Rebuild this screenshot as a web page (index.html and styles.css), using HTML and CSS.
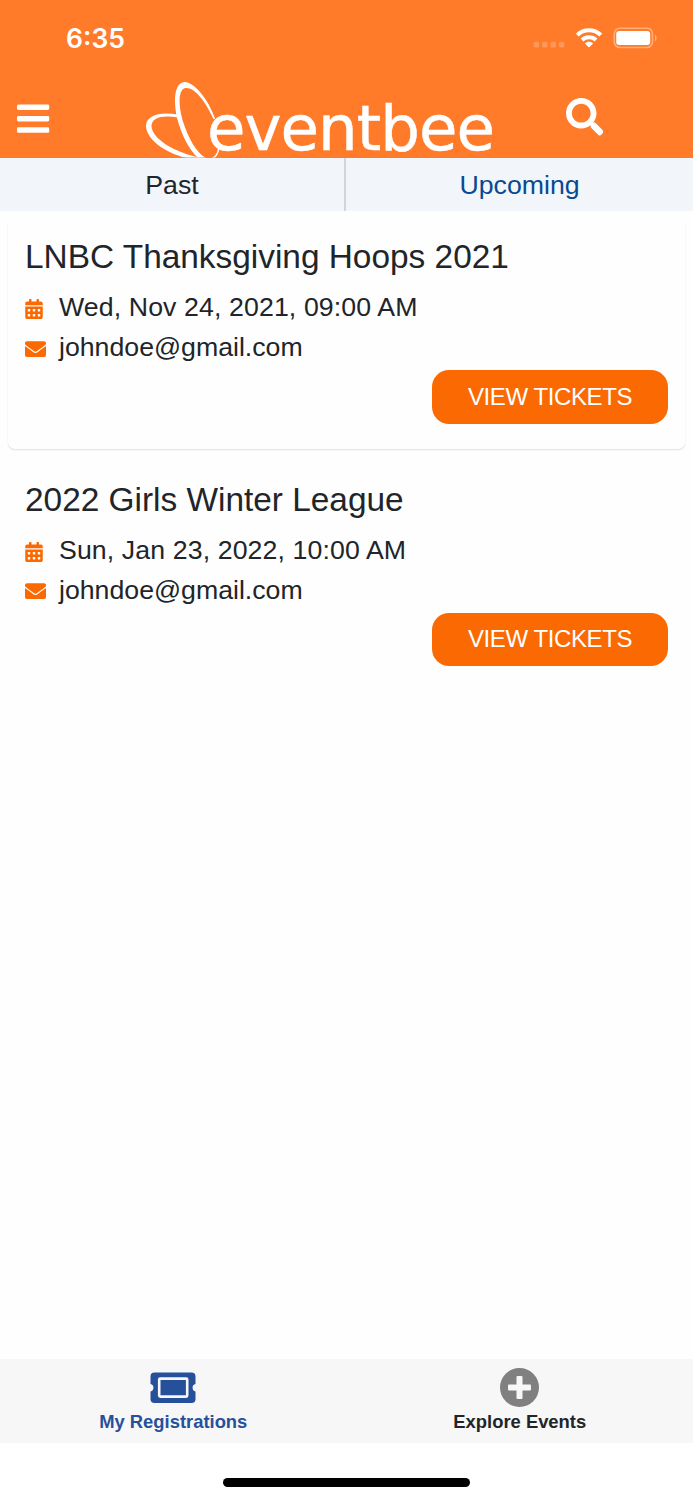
FILE: index.html
```html
<!DOCTYPE html>
<html lang="en">
<head>
<meta charset="utf-8">
<title>eventbee</title>
<link rel="stylesheet" href="styles.css">
</head>
<body>
<svg class="defs" width="0" height="0" aria-hidden="true">
  <symbol id="calendar" viewBox="0 0 448 512"><path d="M0 464c0 26.500 21.500 48 48 48h352c26.500 0 48-21.500 48-48V192H0v272zm320-196c0-6.600 5.400-12 12-12h40c6.600 0 12 5.400 12 12v40c0 6.600-5.400 12-12 12h-40c-6.600 0-12-5.400-12-12v-40zm0 128c0-6.600 5.400-12 12-12h40c6.600 0 12 5.400 12 12v40c0 6.600-5.400 12-12 12h-40c-6.600 0-12-5.400-12-12v-40zM192 268c0-6.600 5.400-12 12-12h40c6.600 0 12 5.400 12 12v40c0 6.600-5.400 12-12 12h-40c-6.600 0-12-5.400-12-12v-40zm0 128c0-6.600 5.400-12 12-12h40c6.600 0 12 5.400 12 12v40c0 6.600-5.400 12-12 12h-40c-6.600 0-12-5.400-12-12v-40zM64 268c0-6.600 5.400-12 12-12h40c6.600 0 12 5.400 12 12v40c0 6.600-5.400 12-12 12H76c-6.600 0-12-5.400-12-12v-40zm0 128c0-6.600 5.400-12 12-12h40c6.600 0 12 5.400 12 12v40c0 6.600-5.400 12-12 12H76c-6.600 0-12-5.400-12-12v-40zM400 64h-48V16c0-8.800-7.200-16-16-16h-32c-8.800 0-16 7.200-16 16v48H160V16c0-8.800-7.200-16-16-16h-32c-8.800 0-16 7.200-16 16v48H48C21.500 64 0 85.500 0 112v48h448v-48c0-26.500-21.500-48-48-48z"/></symbol>
  <symbol id="envelope" viewBox="0 64 512 384"><path d="M502.300 190.800c3.900-3.100 9.700-.2 9.700 4.700V400c0 26.500-21.500 48-48 48H48c-26.500 0-48-21.500-48-48V195.600c0-5 5.700-7.800 9.700-4.700 22.400 17.400 52.100 39.500 154.100 113.600 21.100 15.400 56.700 47.800 92.200 47.600 35.700.3 72-32.800 92.300-47.600 102-74.100 131.600-96.300 154-113.700zM256 320c23.200.4 56.600-29.200 73.400-41.400 132.700-96.300 142.800-104.700 173.400-128.700 5.800-4.500 9.200-11.500 9.200-18.900v-19c0-26.500-21.500-48-48-48H48c-26.500 0-48 21.500-48 48v19c0 7.400 3.400 14.300 9.200 18.900 30.600 23.900 40.700 32.400 173.400 128.700 16.800 12.200 50.200 41.800 73.400 41.400z"/></symbol>
</svg>
<div class="screen">
  <header class="header">
    <div class="status">
      <span class="time">6:35</span>
      <div class="indicators">
        <svg class="signal" viewBox="0 0 32 7" fill="#fff" opacity=".22"><rect x=".6" y=".7" width="5.600" height="5.800" rx="1.500"/><rect x="9" y=".7" width="5.600" height="5.800" rx="1.500"/><rect x="17.400" y=".7" width="5.600" height="5.800" rx="1.500"/><rect x="25.800" y=".7" width="5.600" height="5.800" rx="1.500"/></svg>
        <svg class="wifi" viewBox="0 0 28 21"><g fill="none" stroke="#fff" stroke-width="4"><path d="M2.200 8C8.900 1.500 19.100 1.500 25.800 8"/><path d="M7 13c4-3.700 10-3.700 14 0"/></g><path fill="#fff" d="M9.900 16.400c2.300-2.100 5.900-2.100 8.200 0L14 20.500z"/></svg>
        <svg class="battery" viewBox="0 0 44 22"><rect x="1.300" y="1.200" width="38.200" height="19.300" rx="5.500" fill="none" stroke="#fff" stroke-opacity=".4" stroke-width="1.600"/><rect x="3.200" y="4" width="34" height="14" rx="3" fill="#fff"/><path fill="#fff" fill-opacity=".4" d="M42 7.600c2.200 1.400 2.200 5.400 0 6.800z"/></svg>
      </div>
    </div>
    <div class="brand-row">
      <svg class="menu" viewBox="0 0 33 30" fill="#fff"><rect width="32.200" height="5.500" y=".4" rx="1.400"/><rect width="32.200" height="5.500" y="12" rx="1.400"/><rect width="32.200" height="5.500" y="23.300" rx="1.400"/></svg>
      <svg class="logo" viewBox="0 0 350 96">
        <clipPath id="petals"><rect x="-2" width="90" height="76.500"/></clipPath>
        <g fill="#fff" clip-path="url(#petals)">
          <path d="M31 33.500C14 30.500 0 34.500 0 45C.5 59 21 73.500 45 78L58 77.500C30 72.500 6.500 58.500 5.500 45.500C5.500 36.500 16 34 32 36.500Z"/>
          <path d="M37 1.300C29 3.400 27 18 31 37C36.500 57 44 70 54 79C65 84 74 75 73.500 65L72 65C72 74 67 78 61 77.500C51 73 42.500 58 36.500 39C32 22 32.500 8.500 39.500 7C48 6 59 19 67.500 38L69.200 38C62 17 46-1 37 1.300Z"/>
        </g>
        <text class="wordmark" x="61" y="69" textLength="288">eventbee</text>
      </svg>
      <svg class="search" viewBox="0 0 512 512"><path fill="#fff" d="M505 442.700L405.300 343c-4.500-4.500-10.600-7-17-7H372c27.600-35.300 44-79.700 44-128C416 93.100 322.900 0 208 0S0 93.100 0 208s93.100 208 208 208c48.300 0 92.700-16.400 128-44v16.300c0 6.400 2.500 12.500 7 17l99.700 99.700c9.400 9.400 24.600 9.400 33.900 0l28.300-28.300c9.400-9.400 9.400-24.600.1-34zM208 336c-70.700 0-128-57.200-128-128 0-70.700 57.200-128 128-128 70.700 0 128 57.200 128 128 0 70.700-57.200 128-128 128z"/></svg>
    </div>
  </header>
  <nav class="tabs">
    <a class="tab"><span>Past</span></a>
    <a class="tab tab-active"><span>Upcoming</span></a>
  </nav>
  <main class="events">
    <article class="card">
      <h2 class="title">LNBC Thanksgiving Hoops 2021</h2>
      <p class="row date"><svg class="cal"><use href="#calendar"/></svg><span>Wed, Nov 24, 2021, 09:00 AM</span></p>
      <p class="row"><svg class="env"><use href="#envelope"/></svg><span>johndoe@gmail.com</span></p>
      <button class="view">VIEW TICKETS</button>
    </article>
    <article class="card">
      <h2 class="title">2022 Girls Winter League</h2>
      <p class="row date"><svg class="cal"><use href="#calendar"/></svg><span>Sun, Jan 23, 2022, 10:00 AM</span></p>
      <p class="row"><svg class="env"><use href="#envelope"/></svg><span>johndoe@gmail.com</span></p>
      <button class="view">VIEW TICKETS</button>
    </article>
  </main>
  <nav class="bottom">
    <a class="item item-active">
      <svg class="ticket" viewBox="0 0 46 31"><path fill="#27509b" d="M4 .5h37.500a4 4 0 0 1 4 4v7.500a3.800 3.800 0 0 0 0 7.400V27a4 4 0 0 1-4 4H4.500a4 4 0 0 1-4-4v-7.600a3.800 3.800 0 0 0 0-7.400V4.500a4 4 0 0 1 4-4z"/><rect x="9.200" y="6.600" width="28" height="18" rx="1" fill="none" stroke="#f7f7f7" stroke-width="2.600"/></svg>
      <span>My Registrations</span>
    </a>
    <a class="item">
      <svg class="plus" viewBox="0 0 40 40"><circle cx="19.500" cy="19.500" r="19.500" fill="#808080"/><path fill="#f7f7f7" d="M17.500 8h4a1 1 0 0 1 1 1v7.500H30a1 1 0 0 1 1 1v4a1 1 0 0 1-1 1h-7.500V30a1 1 0 0 1-1 1h-4a1 1 0 0 1-1-1v-7.500H9a1 1 0 0 1-1-1v-4a1 1 0 0 1 1-1h7.500V9a1 1 0 0 1 1-1z"/></svg>
      <span>Explore Events</span>
    </a>
  </nav>
  <div class="home-area"><div class="home-bar"></div></div>
</div>
</body>
</html>
```
FILE: styles.css
```css
* { box-sizing: border-box; }
body { margin: 0; font-family: "Liberation Sans", Arial, sans-serif; color: #212529; background: #fff; }
.defs { display: none; }
svg { display: block; flex: none; }
.screen { height: 1500px; display: flex; flex-direction: column; background: #fefefe; }
.header { height: 157.500px; flex: none; background: #ff7a29; position: relative; }
.status { height: 81px; display: flex; justify-content: space-between; padding: 23px 36px 0 66px; }
.time { font: 600 26.500px/31px Inter, sans-serif; color: #fff; letter-spacing: 0; }
.indicators { display: flex; align-items: flex-start; }
.signal { width: 32px; height: 7px; margin: 18px 10px 0 0; }
.wifi { width: 28px; height: 21px; margin: 4px 10px 0 0; }
.battery { width: 44px; height: 22px; margin-top: 3.500px; }
.brand-row { height: 76.500px; display: flex; align-items: flex-start; padding-left: 17px; }
.menu { width: 33px; height: 30px; margin-top: 23px; }
.logo { width: 350px; height: 96px; margin-left: 96px; overflow: visible; }
.wordmark { font: 62.500px "DejaVu Sans", sans-serif; fill: #fff; stroke: #fff; stroke-width: .5px; }
.search { width: 37.500px; height: 37.500px; margin: 17px 0 0 69.500px; }
.tabs { height: 53px; flex: none; display: grid; grid-template-columns: 346px 1fr; background: #f2f6fb; }
.tab { display: flex; align-items: center; justify-content: center; font-size: 26.700px; line-height: 30px; padding-top: 2px; }
.tab:first-child { border-right: 2px solid #d2d5d9; }
.tab-active { color: #084a91; }
.events { flex: 1; padding: 5.500px 8px 0; display: flex; flex-direction: column; gap: 9.500px; }
.card { height: 233px; padding: 22px 17px; border-radius: 7px; background: #fefefe; box-shadow: 0 1.500px 1.500px -.5px rgba(0, 0, 0, .12); display: flex; flex-direction: column; align-items: flex-start; }
.card + .card { box-shadow: 0 0 1px rgba(0, 0, 0, .04); }
.title { margin: 0 0 11px; font-size: 33.400px; line-height: 38px; font-weight: 400; white-space: nowrap; }
.row { margin: 0; height: 40px; display: flex; align-items: center; font-size: 26.700px; line-height: 30px; white-space: nowrap; }
.date { letter-spacing: .11px; }
.cal { width: 18px; height: 20px; margin: 4px 16px 0 0; fill: #fb6a02; }
.env { width: 21px; height: 16px; margin: 3px 13px 0 0; fill: #fb6a02; }
.view { align-self: flex-end; margin: 3px 0 0; width: 236px; height: 53.500px; flex: none; border: 0; border-radius: 17px; background: #fb6a02; color: #fff; font: 24px/28px "Liberation Sans", Arial, sans-serif; letter-spacing: -.4px; padding: 0; }
.bottom { height: 83.500px; flex: none; display: grid; grid-template-columns: 1fr 1fr; background: #f7f7f7; }
.item { display: flex; flex-direction: column; align-items: center; font-size: 18.400px; line-height: 22px; font-weight: 700; }
.item-active { color: #27509b; }
.ticket { width: 46px; height: 31px; margin: 13px 0 8px; }
.plus { width: 40px; height: 40px; margin: 8.500px 0 3.500px; }
.home-area { height: 57.500px; flex: none; display: flex; justify-content: center; padding-top: 35.500px; background: #fff; }
.home-bar { width: 247px; height: 8.500px; border-radius: 5px; background: #000; }
```
